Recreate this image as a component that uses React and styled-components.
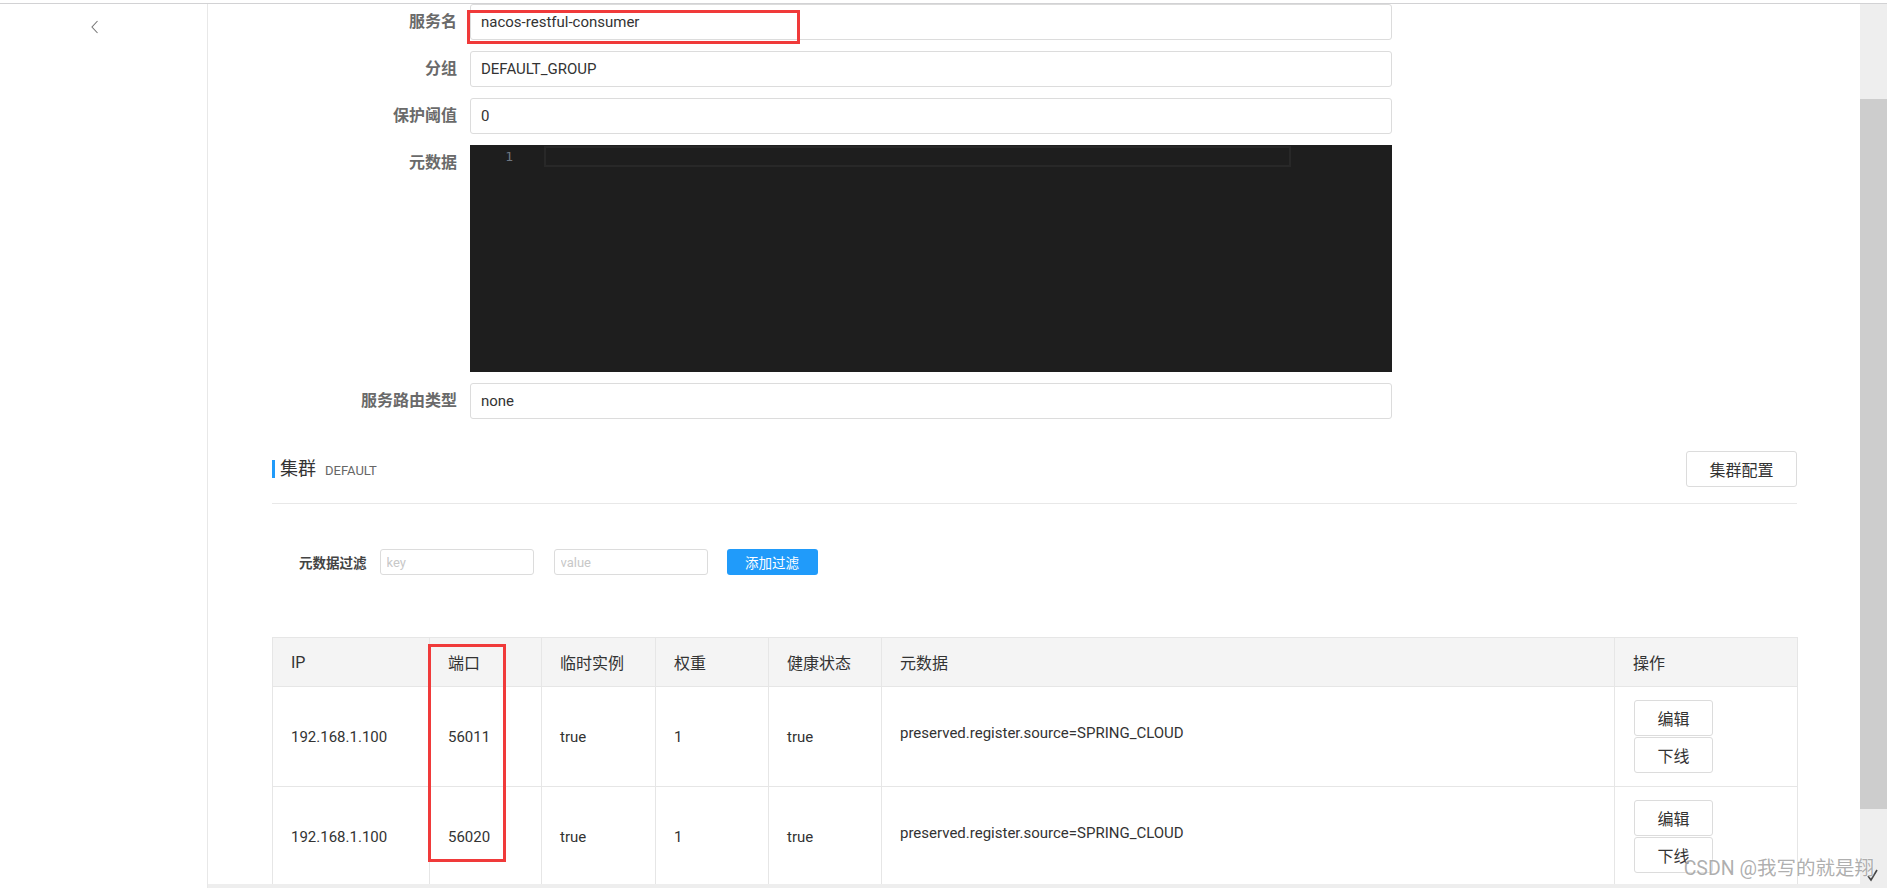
import styled, { createGlobalStyle } from 'styled-components';

const GlobalStyle = createGlobalStyle`
  html, body {
    margin: 0;
    padding: 0;
    background: #fff;
    overflow: hidden;
  }
  body {
    font-family: Roboto, "Noto Sans CJK SC", sans-serif;
    color: #333;
  }
  * {
    box-sizing: border-box;
  }
`;

const Screen = styled.div`
  position: relative;
  width: 1887px;
  height: 888px;
  display: flex;
  flex-direction: column;
  overflow: hidden;
`;

const TopEdge = styled.div`
  height: 4px;
  flex-shrink: 0;
  border-bottom: 1px solid #d2d2d4;
`;

const Body = styled.div`
  flex: 1;
  display: flex;
  min-height: 0;
`;

const Sidebar = styled.aside`
  width: 208px;
  flex-shrink: 0;
  border-right: 1px solid #e8e8e8;
  display: flex;
  justify-content: center;
  align-items: flex-start;
  padding: 16px 18px 0 0;
`;

const BackButton = styled.button`
  border: 0;
  background: none;
  padding: 0;
  width: 12px;
  height: 14px;
  display: flex;
  color: #777;
`;

const Main = styled.main`
  flex: 1;
  min-width: 0;
  display: flex;
  flex-direction: column;
`;

const Content = styled.div`
  flex: 1;
  min-height: 0;
  overflow: hidden;
  padding: 0 63px 0 64px;
`;

const HScroll = styled.div`
  height: 4px;
  flex-shrink: 0;
  background: #eee;
`;

const VScroll = styled.div`
  position: relative;
  width: 27px;
  flex-shrink: 0;
  background: #eee;
  padding-top: 95px;
`;

const Thumb = styled.div`
  height: 710px;
  background: #cdcdcd;
`;

const CornerArrow = styled.svg`
  position: absolute;
  left: 7px;
  bottom: 6px;
`;

const Form = styled.div`
  display: flex;
  flex-direction: column;
  gap: 11px;
`;

const FormRow = styled.div`
  display: grid;
  grid-template-columns: 185px 922px;
  column-gap: 13px;
  align-items: start;
`;

const Label = styled.label`
  text-align: right;
  font-size: 16px;
  line-height: 36px;
  font-weight: 600;
  color: #6a6a6a;
`;

const Field = styled.div`
  position: relative;
  height: 36px;
  border: 1px solid #dcdcdc;
  border-radius: 3px;
  padding: 0 10px;
  display: flex;
  align-items: center;
  font-size: 15px;
  color: #333;
`;

const Mark = styled.div`
  position: absolute;
  border: 3px solid #f03a3a;
  pointer-events: none;
`;

const FieldMark = styled(Mark)`
  left: -4px;
  top: 5px;
  width: 333px;
  height: 34px;
`;

const Editor = styled.div`
  height: 227px;
  background: #1e1e1e;
  display: flex;
  align-items: flex-start;
`;

const Gutter = styled.div`
  width: 74px;
  padding: 2px 31px 0 0;
  text-align: right;
  font-family: "DejaVu Sans Mono", monospace;
  font-size: 13px;
  line-height: 20px;
  color: #6e7681;
`;

const CurrentLine = styled.div`
  width: 747px;
  height: 21px;
  margin-top: 1px;
  border: 2px solid #282828;
`;

const ClusterHeader = styled.div`
  margin-top: 32px;
  padding-bottom: 16px;
  border-bottom: 1px solid #e8e8e8;
  display: flex;
  align-items: center;
  justify-content: space-between;
`;

const ClusterTitle = styled.div`
  display: flex;
  align-items: center;
  border-left: 3px solid #209bfa;
  padding-left: 5px;
  height: 18px;
  gap: 9px;
`;

const TitleText = styled.span`
  font-size: 18px;
  color: #333;
  line-height: 18px;
`;

const TitleSub = styled.span`
  font-size: 13px;
  color: #666;
  margin-top: 3px;
`;

const Button = styled.button`
  font-family: inherit;
  background: #fff;
  border: 1px solid #dcdcdc;
  border-radius: 3px;
  color: #333;
  font-size: 16px;
  height: ${p => p.$h || 36}px;
  width: ${p => p.$w}px;
  padding: 0;
  cursor: pointer;
`;

const FilterRow = styled.div`
  margin-top: 45px;
  padding-left: 27px;
  display: flex;
  align-items: center;
`;

const FilterLabel = styled.span`
  font-size: 13.5px;
  font-weight: 600;
  color: #444;
  margin-right: 13px;
`;

const FilterInput = styled.input`
  width: 154px;
  height: 26px;
  border: 1px solid #dcdcdc;
  border-radius: 3px;
  padding: 0 6px;
  margin-right: ${p => p.$gap}px;
  font-family: inherit;
  font-size: 13px;
  color: #333;
  &::placeholder {
    color: #c8c8c8;
  }
`;

const PrimaryButton = styled.button`
  width: 91px;
  height: 26px;
  border: 0;
  border-radius: 3px;
  background: #209bfa;
  color: #fff;
  font-family: inherit;
  font-size: 13.5px;
  padding: 0;
`;

const TableWrap = styled.div`
  position: relative;
  margin-top: 62px;
`;

const Table = styled.table`
  width: 1525px;
  table-layout: fixed;
  border-collapse: collapse;
  border: 1px solid #e6e6e6;
`;

const Th = styled.th`
  height: 49px;
  background: #f4f4f4;
  border: 1px solid #e6e6e6;
  text-align: left;
  font-weight: normal;
  font-size: 16px;
  color: #333;
  padding: 0 0 0 18px;
`;

const Td = styled.td`
  height: 100px;
  border: 1px solid #e6e6e6;
  font-size: 15px;
  color: #333;
  padding: 0 0 0 18px;
  vertical-align: middle;
`;

const MetaTd = styled(Td)`
  padding-bottom: 8px;
`;

const Actions = styled.div`
  display: flex;
  flex-direction: column;
  gap: 1px;
  padding-left: 1px;
`;

const ColumnMark = styled(Mark)`
  left: 156px;
  top: 7px;
  width: 78px;
  height: 218px;
`;

const Watermark = styled.div`
  position: absolute;
  right: 13px;
  bottom: 7px;
  font-size: 19.5px;
  color: rgba(140, 140, 140, 0.7);
  text-shadow: 0 0 2px #fff;
  pointer-events: none;
`;

const columns = [
  { title: 'IP', width: 157 },
  { title: '端口', width: 112 },
  { title: '临时实例', width: 114 },
  { title: '权重', width: 113 },
  { title: '健康状态', width: 113 },
  { title: '元数据', width: 733 },
  { title: '操作', width: 183 },
];

const instances = [
  { ip: '192.168.1.100', port: 56011, ephemeral: 'true', weight: 1, healthy: 'true', meta: 'preserved.register.source=SPRING_CLOUD' },
  { ip: '192.168.1.100', port: 56020, ephemeral: 'true', weight: 1, healthy: 'true', meta: 'preserved.register.source=SPRING_CLOUD' },
];

function TextRow({ label, value, marked }) {
  return (
    <FormRow>
      <Label>{label}</Label>
      <Field>
        {value}
        {marked && <FieldMark />}
      </Field>
    </FormRow>
  );
}

export default function App() {
  return (
    <>
      <GlobalStyle />
      <Screen>
        <TopEdge />
        <Body>
          <Sidebar>
            <BackButton aria-label='back'>
              <svg width='12' height='14' viewBox='0 0 12 14'>
                <polyline points='8.5,1 3,7 8.5,13' fill='none' stroke='currentColor' strokeWidth='1.1' />
              </svg>
            </BackButton>
          </Sidebar>
          <Main>
            <Content>
              <Form>
                <TextRow label='服务名' value='nacos-restful-consumer' marked />
                <TextRow label='分组' value='DEFAULT_GROUP' />
                <TextRow label='保护阈值' value='0' />
                <FormRow>
                  <Label>元数据</Label>
                  <Editor>
                    <Gutter>1</Gutter>
                    <CurrentLine />
                  </Editor>
                </FormRow>
                <TextRow label='服务路由类型' value='none' />
              </Form>

              <ClusterHeader>
                <ClusterTitle>
                  <TitleText>集群</TitleText>
                  <TitleSub>DEFAULT</TitleSub>
                </ClusterTitle>
                <Button $w={111}>集群配置</Button>
              </ClusterHeader>

              <FilterRow>
                <FilterLabel>元数据过滤</FilterLabel>
                <FilterInput placeholder='key' $gap={20} />
                <FilterInput placeholder='value' $gap={19} />
                <PrimaryButton>添加过滤</PrimaryButton>
              </FilterRow>

              <TableWrap>
                <Table>
                  <colgroup>
                    {columns.map(c => (
                      <col key={c.title} style={{ width: c.width }} />
                    ))}
                  </colgroup>
                  <thead>
                    <tr>
                      {columns.map(c => (
                        <Th key={c.title}>{c.title}</Th>
                      ))}
                    </tr>
                  </thead>
                  <tbody>
                    {instances.map(row => (
                      <tr key={row.port}>
                        <Td>{row.ip}</Td>
                        <Td>{row.port}</Td>
                        <Td>{row.ephemeral}</Td>
                        <Td>{row.weight}</Td>
                        <Td>{row.healthy}</Td>
                        <MetaTd>{row.meta}</MetaTd>
                        <Td>
                          <Actions>
                            <Button $w={79}>编辑</Button>
                            <Button $w={79}>下线</Button>
                          </Actions>
                        </Td>
                      </tr>
                    ))}
                  </tbody>
                </Table>
                <ColumnMark />
              </TableWrap>
            </Content>
            <HScroll />
          </Main>
          <VScroll>
            <Thumb />
            <CornerArrow width='11' height='13' viewBox='0 0 11 13'>
              <polyline points='1,7 4,11 10,1' fill='none' stroke='#444' strokeWidth='1.6' />
            </CornerArrow>
          </VScroll>
        </Body>
        <Watermark>CSDN @我写的就是翔</Watermark>
      </Screen>
    </>
  );
}
